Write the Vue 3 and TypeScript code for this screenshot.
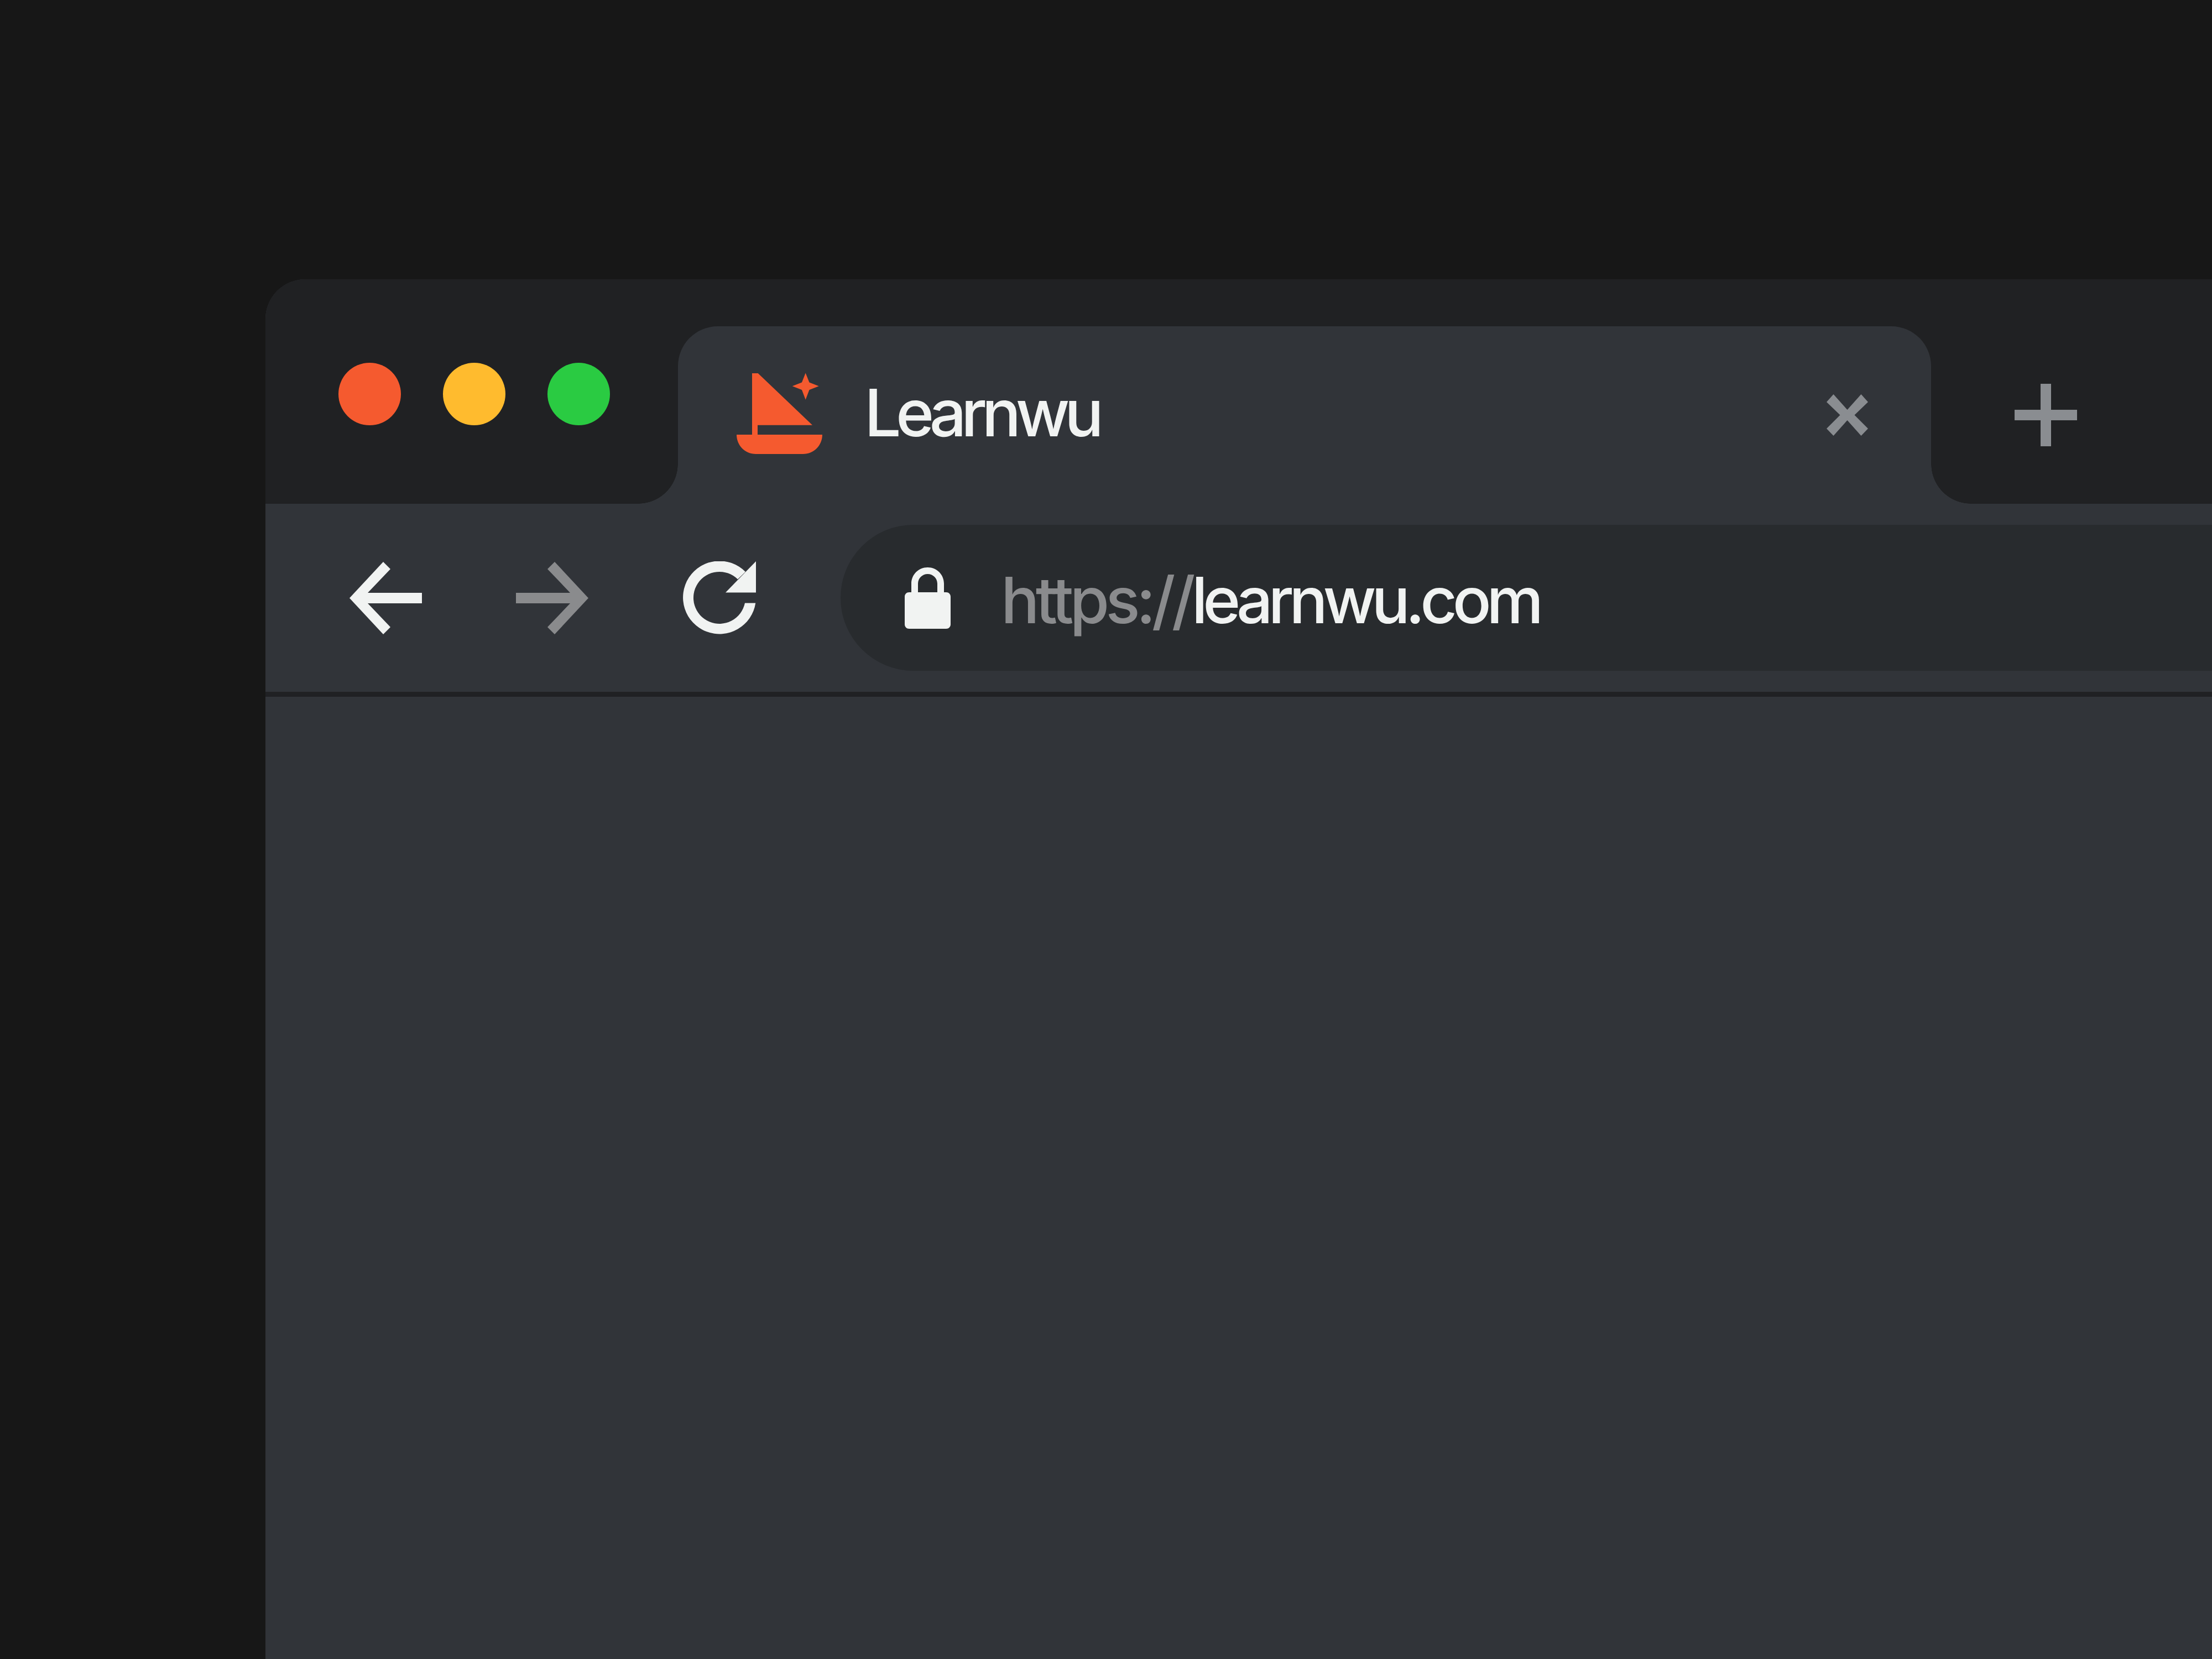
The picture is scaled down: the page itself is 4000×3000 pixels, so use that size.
<template>
	<div class="page">
		<div class="browser">
			<div class="titlebar">
				<div class="lights">
					<span class="light red"></span>
					<span class="light yellow"></span>
					<span class="light green"></span>
				</div>
				<div class="tab">
					<svg class="logo" width="155" height="151" viewBox="0 0 155 151">
						<path fill="#f55a2f" d="M28 0H38.700L137 93.700H38V111H115H155C155 130 140 146 120 146H35C15 146 0 130 0 111H28Z" />
						<path fill="#f55a2f" d="M124.700 -0.500L131.500 16.500L148.700 23.300L131.500 30L124.700 47.700L118 30L100.700 23.300L118 16.500Z" />
					</svg>
					<span class="tab-title">Learnwu</span>
					<svg class="close" width="75" height="75" viewBox="0 0 75 75">
						<path fill="#8a8d91" d="M12.500 0L37.500 28L62.500 0L75 14L50.500 37.500L75 62L62.500 75L37.500 47L12.500 75L0 62L24.500 37.500L0 14Z" />
					</svg>
				</div>
				<svg class="plus" width="113" height="113" viewBox="0 0 113 113">
					<path fill="#8a8d91" d="M47 0H66V47H113V66H66V113H47V66H0V47H47Z" />
				</svg>
			</div>
			<div class="toolbar">
				<svg class="nav" width="131" height="131" viewBox="0 0 131 131">
					<path fill="#f1f3f2" d="M0 65.500L61 0L74 13L33 56H131V75H33L74 118L61 131Z" />
				</svg>
				<svg class="nav forward" width="131" height="131" viewBox="0 0 131 131">
					<path fill="#8a8b8d" d="M131 65.500L70 0L57 13L98 56H0V75H98L57 118L70 131Z" />
				</svg>
				<svg class="nav reload" width="132" height="132" viewBox="0 0 132 132">
					<path fill="#f1f3f2" d="M131.300 75.500A66 66 0 1 1 113 19L99 32.500A47 47 0 1 0 112 75.500Z" />
					<path fill="#f1f3f2" d="M132 0V56.500H77Z" />
				</svg>
				<div class="address">
					<svg class="lock" width="83" height="111" viewBox="0 0 83 111">
						<path fill="#f1f3f2" fill-rule="evenodd" d="M12 45V29.500C12 13 25 0 41.500 0S71 13 71 29.500V45H75C79.500 45 83 48.500 83 53V103C83 107.500 79.500 111 75 111H8C3.500 111 0 107.500 0 103V53C0 48.500 3.500 45 8 45ZM24 45H59V29.500C59 19.500 51 12 41.500 12S24 19.500 24 29.500Z" />
					</svg>
					<span class="url"><span class="scheme">https://</span>learnwu.com</span>
				</div>
			</div>
			<div class="separator"></div>
			<div class="content"></div>
		</div>
	</div>
</template>

<style scoped>
.page {
	width: 4000px;
	height: 3000px;
	box-sizing: border-box;
	padding: 505px 0 0 480px;
	background: #171717;
	overflow: hidden;
	font-family: Inter, "Liberation Sans", sans-serif;
}

.browser {
	height: 100%;
	display: flex;
	flex-direction: column;
	background: #313439;
	border-top-left-radius: 72px;
	overflow: hidden;
}

.titlebar {
	height: 406px;
	flex: none;
	display: flex;
	align-items: flex-end;
	background: #202123;
}

.lights {
	width: 746px;
	height: 406px;
	flex: none;
	box-sizing: border-box;
	padding: 151px 0 0 132px;
	display: flex;
	gap: 76px;
}

.light {
	width: 113px;
	height: 113px;
	border-radius: 50%;
}

.red {
	background: #f55a2f;
}

.yellow {
	background: #ffbb2e;
}

.green {
	background: #2acb42;
}

.tab {
	position: relative;
	width: 2266px;
	height: 321px;
	flex: none;
	box-sizing: border-box;
	padding: 0 114px 0 106px;
	display: flex;
	align-items: center;
	background: #313439;
	border-radius: 72px 72px 0 0;
}

.tab::before,
.tab::after {
	content: "";
	position: absolute;
	bottom: 0;
	width: 72px;
	height: 72px;
}

.tab::before {
	right: 100%;
	background: radial-gradient(circle at 0 0, transparent 71.500px, #313439 72px);
}

.tab::after {
	left: 100%;
	background: radial-gradient(circle at 100% 0, transparent 71.500px, #313439 72px);
}

.logo {
	flex: none;
	overflow: visible;
}

.tab-title {
	margin-left: 76px;
	margin-top: -10px;
	font-size: 118px;
	font-weight: 500;
	line-height: 1;
	letter-spacing: -9.700px;
	color: #f1f3f2;
}

.close {
	margin-left: auto;
	flex: none;
}

.plus {
	margin: 0 0 104px 151px;
	flex: none;
}

.toolbar {
	height: 340px;
	flex: none;
	box-sizing: border-box;
	padding: 38px 0 38px 152px;
	display: flex;
	align-items: center;
}

.nav {
	flex: none;
}

.forward {
	margin-left: 170px;
}

.reload {
	margin-left: 171px;
}

.address {
	margin-left: 153px;
	flex: 1;
	height: 264px;
	box-sizing: border-box;
	padding-left: 116px;
	display: flex;
	align-items: center;
	background: #282b2e;
	border-radius: 132px 0 0 132px;
}

.lock {
	flex: none;
}

.url {
	margin-left: 91px;
	margin-top: 8px;
	font-size: 116px;
	font-weight: 500;
	line-height: 1;
	letter-spacing: -8.500px;
	color: #f1f3f2;
}

.scheme {
	letter-spacing: -7px;
	color: #8a8b8d;
}

.separator {
	height: 9px;
	flex: none;
	background: #202124;
}

.content {
	flex: 1;
}
</style>

<script setup lang="ts">
</script>
